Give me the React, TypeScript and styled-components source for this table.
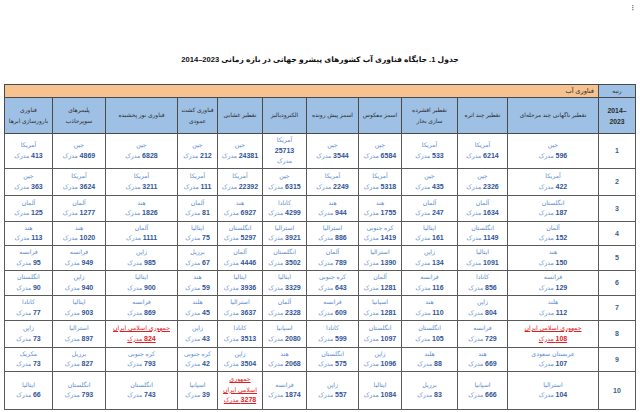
import React from "react";
import styled, { createGlobalStyle } from "styled-components";

const GlobalStyle = createGlobalStyle`
  html, body { margin: 0; padding: 0; background: #ffffff; }
  body { font-family: "Liberation Sans", "DejaVu Sans", sans-serif; }
`;

const Page = styled.div`
  width: 640px;
  height: 412px;
  direction: rtl;
  padding-top: 54px;
  box-sizing: border-box;
  position: relative;
`;

const Title = styled.div`
  text-align: center;
  font-weight: bold;
  font-size: 7.6px;
  line-height: 12px;
  color: #111;
  margin-bottom: 18px;
`;

const Table = styled.table`
  border-collapse: collapse;
  table-layout: fixed;
  width: 631px;
  margin-right: 4px;
  border: 1.5px solid #3a3a3a;
`;

const Row = styled.tr<{ $h: number }>`
  height: ${(p) => p.$h}px;
`;

const HeadCell = styled.th<{ $bg: string; $bold?: boolean }>`
  background: ${(p) => p.$bg};
  border: 1px solid #4a4a4a;
  font-weight: ${(p) => (p.$bold ? "bold" : "normal")};
  font-size: ${(p) => (p.$bold ? "6.8px" : "5.9px")};
  line-height: 11px;
  color: #2b2b2b;
  text-align: center;
  padding: 0;
  vertical-align: middle;
  white-space: nowrap;
`;

const BandCell = styled.th`
  background: #f6c28f;
  border: 1px solid #4a4a4a;
  font-weight: normal;
  font-size: 6.6px;
  color: #2b2b2b;
  text-align: right;
  padding: 0 4px;
`;

const Cell = styled.td`
  border: 1px solid #5a5a5a;
  text-align: center;
  vertical-align: middle;
  padding: 1px 0;
  font-size: 6.2px;
  line-height: 10.5px;
  color: #5b8ccc;
`;

const RankCell = styled.td`
  border: 1px solid #5a5a5a;
  text-align: center;
  vertical-align: middle;
  font-size: 7px;
  font-weight: bold;
  color: #3b5f8c;
`;

const Line = styled.div`
  white-space: nowrap;
`;

const Num = styled.span<{ $red?: boolean }>`
  font-weight: bold;
  font-size: 7px;
  color: ${(p) => (p.$red ? "#e0201f" : "#2f5597")};
`;

const RedLine = styled.div`
  white-space: nowrap;
  color: #e0201f;
  text-decoration: underline;
  text-decoration-color: #e0201f;
`;

const Ltr = styled.span`
  direction: ltr;
  unicode-bidi: isolate;
  display: inline-block;
`;

const Corner = styled.div`
  position: absolute;
  top: 3px;
  right: 6px;
  font-size: 8px;
  color: #333;
  direction: ltr;
`;

type Entry = [string, string] | [string, string, "red"] | [string, string, "wrap"] | [string, string, "red3"];

const headers: { lines: string[] }[] = [
  { lines: ["تقطیر ناگهانی چند مرحله‌ای"] },
  { lines: ["تقطیر چند اثره"] },
  { lines: ["تقطیر افشرده", "سازی بخار"] },
  { lines: ["اسمز معکوس"] },
  { lines: ["اسمز پیش رونده"] },
  { lines: ["الکترودیالیز"] },
  { lines: ["تقطیر غشایی"] },
  { lines: ["فناوری کشت", "عمودی"] },
  { lines: ["فناوری نور پخشیده"] },
  { lines: ["پلیمرهای", "سوپرجاذب"] },
  { lines: ["فناوری", "بارورسازی ابرها"] },
];

const widths = [37, 91, 50, 56, 43, 52, 44, 45, 40, 72, 53, 48];

const rows: Entry[][] = [
  [["چین", "596"], ["آمریکا", "6214"], ["آمریکا", "533"], ["چین", "6584"], ["چین", "3544"], ["آمریکا", "25713", "wrap"], ["چین", "24381"], ["چین", "212"], ["چین", "6828"], ["چین", "4869"], ["آمریکا", "413"]],
  [["آمریکا", "422"], ["چین", "2326"], ["چین", "435"], ["آمریکا", "5318"], ["آمریکا", "2249"], ["چین", "6315"], ["آمریکا", "22392"], ["آمریکا", "111"], ["آمریکا", "3211"], ["آمریکا", "3624"], ["چین", "363"]],
  [["انگلستان", "187"], ["آلمان", "1634"], ["آلمان", "247"], ["هند", "1755"], ["هند", "944"], ["کانادا", "4299"], ["هند", "6927"], ["آلمان", "81"], ["هند", "1826"], ["آلمان", "1277"], ["آلمان", "125"]],
  [["آلمان", "152"], ["انگلستان", "1149"], ["ایتالیا", "161"], ["کره جنوبی", "1419"], ["استرالیا", "886"], ["استرالیا", "3921"], ["انگلستان", "5297"], ["ایتالیا", "75"], ["آلمان", "1111"], ["هند", "1020"], ["هند", "113"]],
  [["هند", "150"], ["ایتالیا", "1091"], ["ژاپن", "134"], ["استرالیا", "1390"], ["آلمان", "789"], ["انگلستان", "3502"], ["آلمان", "4446"], ["برزیل", "67"], ["ژاپن", "985"], ["فرانسه", "949"], ["فرانسه", "95"]],
  [["فرانسه", "129"], ["کانادا", "856"], ["فرانسه", "116"], ["آلمان", "1281"], ["کره جنوبی", "643"], ["ایتالیا", "3329"], ["ایتالیا", "3936"], ["هند", "59"], ["ایتالیا", "900"], ["ژاپن", "940"], ["انگلستان", "90"]],
  [["هلند", "112"], ["ژاپن", "804"], ["هند", "110"], ["اسپانیا", "1281"], ["فرانسه", "609"], ["آلمان", "2328"], ["استرالیا", "3637"], ["هلند", "45"], ["فرانسه", "869"], ["ایتالیا", "903"], ["کانادا", "77"]],
  [["جمهوری اسلامی ایران", "108", "red"], ["فرانسه", "729"], ["انگلستان", "105"], ["انگلستان", "1097"], ["کانادا", "599"], ["اسپانیا", "2080"], ["کانادا", "3513"], ["ژاپن", "43"], ["جمهوری اسلامی ایران", "824", "red"], ["استرالیا", "897"], ["ژاپن", "73"]],
  [["عربستان سعودی", "107"], ["هند", "669"], ["هلند", "88"], ["ژاپن", "1096"], ["انگلستان", "575"], ["هند", "2068"], ["ژاپن", "3504"], ["کره جنوبی", "42"], ["کره جنوبی", "793"], ["برزیل", "827"], ["مکزیک", "73"]],
  [["استرالیا", "104"], ["اسپانیا", "666"], ["برزیل", "83"], ["ایتالیا", "1084"], ["ژاپن", "557"], ["فرانسه", "1874"], ["جمهوری اسلامی ایران", "3278", "red3"], ["اسپانیا", "39"], ["انگلستان", "743"], ["انگلستان", "793"], ["ایتالیا", "66"]],
];

const rowHeights = [34, 27, 26, 23, 25, 25, 25, 27, 22, 38];

function EntryCell({ e }: { e: Entry }) {
  const [country, num, kind] = e as [string, string, string | undefined];
  if (kind === "red") {
    return (
      <Cell>
        <RedLine>{country}</RedLine>
        <RedLine>
          <Num $red>{num}</Num> مدرک
        </RedLine>
      </Cell>
    );
  }
  if (kind === "red3") {
    return (
      <Cell>
        <RedLine>جمهوری</RedLine>
        <RedLine>اسلامی ایران</RedLine>
        <RedLine>
          <Num $red>{num}</Num> مدرک
        </RedLine>
      </Cell>
    );
  }
  if (kind === "wrap") {
    return (
      <Cell>
        <Line>{country}</Line>
        <Line>
          <Num>{num}</Num>
        </Line>
        <Line>مدرک</Line>
      </Cell>
    );
  }
  return (
    <Cell>
      <Line>{country}</Line>
      <Line>
        <Num>{num}</Num> مدرک
      </Line>
    </Cell>
  );
}

export default function App() {
  return (
    <>
      <GlobalStyle />
      <Page>
        <Corner>⁝</Corner>
        <Title>
          جدول 1. جایگاه فناوری آب کشورهای پیشرو جهانی در بازه زمانی <Ltr>2014–2023</Ltr>
        </Title>
        <Table>
          <colgroup>
            {widths.map((w, i) => (
              <col key={i} style={{ width: w }} />
            ))}
          </colgroup>
          <thead>
            <Row $h={13}>
              <HeadCell $bg="#9dc0e4">رتبه</HeadCell>
              <BandCell colSpan={11}>فناوری آب</BandCell>
            </Row>
            <Row $h={36}>
              <HeadCell $bg="#9dc0e4" $bold>
                <Ltr>2014–</Ltr>
                <br />
                2023
              </HeadCell>
              {headers.map((h, i) => (
                <HeadCell key={i} $bg="#9dc0e4">
                  {h.lines.map((l, j) => (
                    <div key={j}>{l}</div>
                  ))}
                </HeadCell>
              ))}
            </Row>
          </thead>
          <tbody>
            {rows.map((r, i) => (
              <Row key={i} $h={rowHeights[i]}>
                <RankCell>{i + 1}</RankCell>
                {r.map((e, j) => (
                  <EntryCell key={j} e={e} />
                ))}
              </Row>
            ))}
          </tbody>
        </Table>
      </Page>
    </>
  );
}
